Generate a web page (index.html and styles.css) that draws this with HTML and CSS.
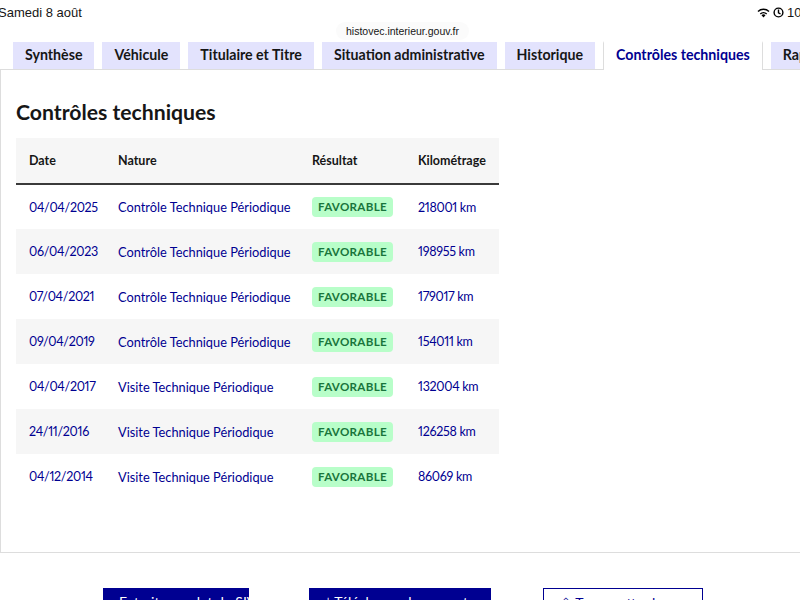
FILE: index.html
```html
<!DOCTYPE html>
<html lang="fr">
<head>
  <meta charset="UTF-8" />
  <meta name="viewport" content="width=device-width, initial-scale=1.0"/>
  <title>HistoVec - Contrôles techniques</title>
  <link rel="stylesheet" href="styles.css">
</head>
<body>

  <div class="statusbar">
    <span class="date">Samedi 8 août</span>
    <span class="url">histovec.interieur.gouv.fr</span>
    <span class="sys">
      <svg width="13" height="10" viewBox="0 0 13 10"><path d="M6.5 9.5l2-2.3a3 3 0 0 0-4 0z M2.8 5.4a5.3 5.3 0 0 1 7.4 0l-1 1.1a3.8 3.8 0 0 0-5.4 0z M0.5 3a8.6 8.6 0 0 1 12 0l-1 1.1a7.1 7.1 0 0 0-10 0z" fill="#000"/></svg>
      <svg width="11" height="11" viewBox="0 0 11 11"><circle cx="5.5" cy="5.5" r="4.4" fill="none" stroke="#000" stroke-width="1.4"/><path d="M5.5 2.6v3.2l2 1.2" fill="none" stroke="#000" stroke-width="1.4"/></svg>
      <span>100</span>
    </span>
  </div>

  <nav class="tabs">
    <a class="tab">Synthèse</a>
    <a class="tab">Véhicule</a>
    <a class="tab">Titulaire et Titre</a>
    <a class="tab">Situation administrative</a>
    <a class="tab">Historique</a>
    <a class="tab active">Contrôles techniques</a>
    <a class="tab">Rapport</a>
  </nav>

  <section class="panel">
    <h2>Contrôles techniques</h2>
    <table>
      <thead>
        <tr><th>Date</th><th>Nature</th><th>Résultat</th><th>Kilométrage</th></tr>
      </thead>
      <tbody id="rows"></tbody>
    </table>
  </section>

  <div class="actions">
    <a class="btn">Extrait complet du SIV</a>
    <a class="btn">⤓ Télécharger le rapport</a>
    <a class="btn secondary">⇪ Transmettre le rapport</a>
  </div>

  <script>
    const controles = [
      { date: "04/04/2025", nature: "Contrôle Technique Périodique", km: 218001 },
      { date: "06/04/2023", nature: "Contrôle Technique Périodique", km: 198955 },
      { date: "07/04/2021", nature: "Contrôle Technique Périodique", km: 179017 },
      { date: "09/04/2019", nature: "Contrôle Technique Périodique", km: 154011 },
      { date: "04/04/2017", nature: "Visite Technique Périodique", km: 132004 },
      { date: "24/11/2016", nature: "Visite Technique Périodique", km: 126258 },
      { date: "04/12/2014", nature: "Visite Technique Périodique", km: 86069 }
    ];

    const tbody = document.getElementById("rows");
    controles.forEach(ct => {
      const tr = document.createElement("tr");
      tr.innerHTML = `
        <td class="num">${ct.date}</td>
        <td>${ct.nature}</td>
        <td><span class="badge">Favorable</span></td>
        <td class="num">${ct.km} km</td>
      `;
      tbody.appendChild(tr);
    });
  </script>

</body>
</html>
```

FILE: styles.css
```css
* { box-sizing: border-box; }
body {
  font-family: Lato, "Noto Sans", sans-serif;
  margin: 0;
  background: #fff;
  color: #161616;
  overflow: hidden;
}
.statusbar {
  height: 42px;
  position: relative;
  font-family: "Liberation Sans", Arial, sans-serif;
}
.statusbar .date {
  position: absolute;
  left: -2px;
  top: 5px;
  font-size: 13px;
}
.statusbar .url {
  position: absolute;
  left: 336px;
  top: 22px;
  font-size: 10.5px;
  padding: 3px 10px;
  background: #fbfbfb;
  border-radius: 10px;
}
.statusbar .sys {
  position: absolute;
  left: 757px;
  top: 5px;
  display: flex;
  align-items: center;
  gap: 3px;
  font-size: 13px;
  white-space: nowrap;
}
.tabs {
  display: flex;
  gap: 8px;
  padding-left: 13px;
  height: 27px;
  align-items: flex-end;
  white-space: nowrap;
}
.tab {
  flex: none;
  height: 27px;
  line-height: 25px;
  padding: 0 12px;
  background: #e3e3fd;
  font-size: 14.2px;
  font-weight: 700;
  color: #161616;
}
.tab.active {
  background: #fff;
  color: #000091;
  border: 1px solid #ddd;
  border-bottom: none;
  border-top: 2px solid #fff;
  height: 29px;
  line-height: 24px;
  margin-bottom: -1px;
  position: relative;
  z-index: 1;
}
.panel {
  border: 1px solid #ddd;
  border-right: none;
  height: 484px;
  padding: 29px 0 0 15px;
}
.panel h2 {
  margin: 0 0 13px 0;
  font-size: 21.2px;
  font-weight: 700;
  line-height: 26px;
}
table {
  border-collapse: collapse;
  width: 483px;
  font-size: 12.8px;
}
thead tr {
  background: #f6f6f6;
  border-bottom: 2px solid #3a3a3a;
}
th {
  text-align: left;
  font-weight: 700;
  height: 46px;
  padding: 0 0 0 13px;
  font-size: 12.5px;
}
td {
  height: 45px;
  padding: 0 0 0 13px;
  color: #000091;
}
td.num {
  font-size: 12.5px;
  letter-spacing: -0.3px;
  font-variant-numeric: proportional-nums;
}
th:nth-child(1), td:nth-child(1) { width: 88px; }
th:nth-child(2), td:nth-child(2) { width: 196px; padding-left: 14px; }
th:nth-child(3), td:nth-child(3) { width: 105px; padding-left: 12px; }
tbody tr:nth-child(even) { background: #f6f6f6; }
.badge {
  display: inline-block;
  background: #b8fec9;
  color: #18753c;
  font-weight: 700;
  text-transform: uppercase;
  font-size: 11.6px;
  letter-spacing: 0.3px;
  line-height: 20px;
  padding: 0 6px;
  border-radius: 4px;
}
.actions {
  display: flex;
  padding: 35px 0 0 103px;
}
.btn {
  height: 40px;
  background: #000091;
  color: #fff;
  font-size: 14px;
  padding: 5px 16px;
  white-space: nowrap;
  overflow: hidden;
}
.btn:nth-child(1) { width: 146px; margin-right: 60px; }
.btn:nth-child(2) { width: 182px; margin-right: 52px; }
.btn.secondary {
  width: 160px;
  background: #fff;
  color: #000091;
  border: 1px solid #000091;
}
```
